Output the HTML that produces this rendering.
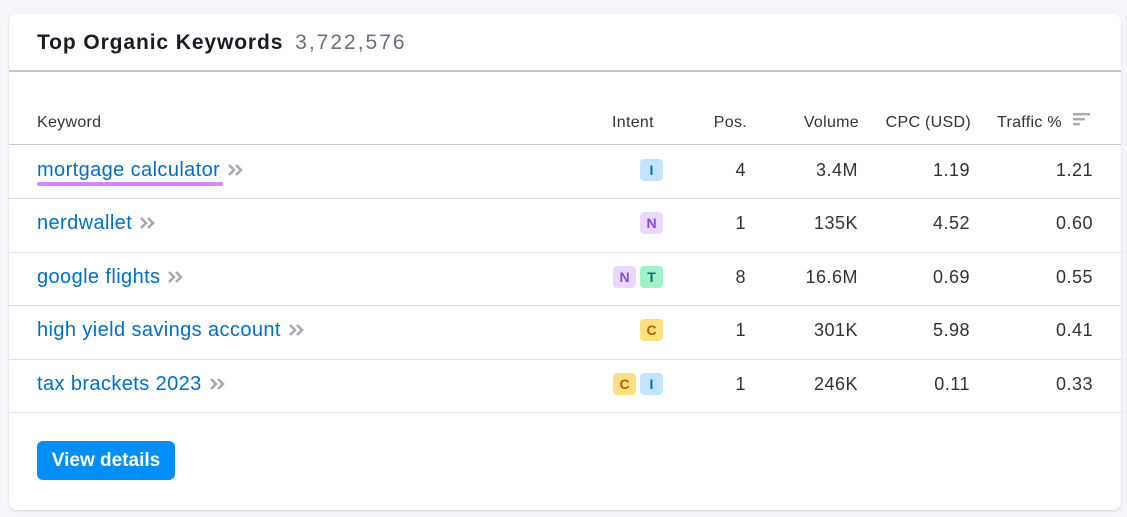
<!DOCTYPE html>
<html><head><style>
body{margin:0;background:#f4f5f9;font-family:"Liberation Sans",sans-serif;width:1127px;height:517px;position:relative;overflow:hidden}
.card{position:absolute;left:9px;top:14px;width:1112px;height:496px;background:#fff;border-radius:8px;box-shadow:0 1px 2px rgba(0,0,0,.12)}
.h{position:absolute;left:28px;top:17px;font-size:21px;font-weight:bold;color:#191b23;letter-spacing:0.9px}
.h span{font-weight:normal;color:#6c6e79;margin-left:4px;letter-spacing:2px}
.hl{position:absolute;left:0;right:0;top:56px;height:2px;background:#c4c7cf}
.th{position:absolute;top:100px;font-size:16px;color:#333;letter-spacing:0.3px}
.line{position:absolute;left:0;right:0;height:1px;background:#e0e1e9}
.kw{position:absolute;left:28px;font-size:20px;color:#006dca;letter-spacing:0.4px;white-space:nowrap}
.kw svg{margin-left:7px;vertical-align:-1px}
.num{position:absolute;font-size:18px;color:#333;text-align:right;letter-spacing:0.5px}
.bd{position:absolute;text-align:right;white-space:nowrap}
.b{display:inline-block;width:23px;height:22px;border-radius:4px;font-size:14px;font-weight:bold;text-align:center;line-height:22px;margin-left:4px}
.bI{background:#c4e5fe;color:#006dca}.bN{background:#ead9ff;color:#8649e1}.bT{background:#9ef2c9;color:#007c65}.bC{background:#fce081;color:#b95c00}
.btn{position:absolute;left:28px;top:427px;width:138px;height:39px;background:#008ff8;border-radius:6px;color:#fff;font-weight:bold;font-size:19px;line-height:39px;text-align:center}
</style></head><body><div class="card">
<div class="h">Top Organic Keywords<span> 3,722,576</span></div>
<div class="hl"></div>
<div class="th" style="left:28px">Keyword</div>
<div class="th" style="left:603px">Intent</div>
<div class="th" style="right:374px">Pos.</div>
<div class="th" style="right:262px">Volume</div>
<div class="th" style="right:150px">CPC (USD)</div>
<div class="th" style="left:988px">Traffic %</div>
<svg style="position:absolute;left:1064px;top:98px" width="18" height="16"><rect x="0" y="1" width="17" height="2.4" fill="#a8a9b3"/><rect x="0" y="6" width="12" height="2.4" fill="#a8a9b3"/><rect x="0" y="11" width="7" height="2.4" fill="#a8a9b3"/></svg>
<div class="line" style="top:130px;background:#c4c7cf"></div>
<div class="line" style="top:184px"></div><div class="line" style="top:238px"></div><div class="line" style="top:291px"></div><div class="line" style="top:345px"></div><div class="line" style="top:398px"></div>
<div class="kw" style="top:145px">mortgage calculator<svg width="18" height="14" viewBox="0 0 18 14"><path d="M2 2l5 5-5 5M9 2l5 5-5 5" stroke="#a8a9b3" stroke-width="2.6" fill="none"/></svg></div>
<div style="position:absolute;left:28px;top:168px;width:186px;height:4px;border-radius:2px;background:#d985fb"></div>
<div class="kw" style="top:198px">nerdwallet<svg width="18" height="14" viewBox="0 0 18 14"><path d="M2 2l5 5-5 5M9 2l5 5-5 5" stroke="#a8a9b3" stroke-width="2.6" fill="none"/></svg></div>
<div class="kw" style="top:252px">google flights<svg width="18" height="14" viewBox="0 0 18 14"><path d="M2 2l5 5-5 5M9 2l5 5-5 5" stroke="#a8a9b3" stroke-width="2.6" fill="none"/></svg></div>
<div class="kw" style="top:305px">high yield savings account<svg width="18" height="14" viewBox="0 0 18 14"><path d="M2 2l5 5-5 5M9 2l5 5-5 5" stroke="#a8a9b3" stroke-width="2.6" fill="none"/></svg></div>
<div class="kw" style="top:359px">tax brackets 2023<svg width="18" height="14" viewBox="0 0 18 14"><path d="M2 2l5 5-5 5M9 2l5 5-5 5" stroke="#a8a9b3" stroke-width="2.6" fill="none"/></svg></div>
<div class="bd" style="right:458px;top:145px"><span class="b bI">I</span></div>
<div class="bd" style="right:458px;top:198px"><span class="b bN">N</span></div>
<div class="bd" style="right:458px;top:252px"><span class="b bN">N</span><span class="b bT">T</span></div>
<div class="bd" style="right:458px;top:305px"><span class="b bC">C</span></div>
<div class="bd" style="right:458px;top:359px"><span class="b bC">C</span><span class="b bI">I</span></div>
<div class="num" style="right:375px;top:146px">4</div><div class="num" style="right:263px;top:146px">3.4M</div><div class="num" style="right:151px;top:146px">1.19</div><div class="num" style="right:28px;top:146px">1.21</div>
<div class="num" style="right:375px;top:199px">1</div><div class="num" style="right:263px;top:199px">135K</div><div class="num" style="right:151px;top:199px">4.52</div><div class="num" style="right:28px;top:199px">0.60</div>
<div class="num" style="right:375px;top:253px">8</div><div class="num" style="right:263px;top:253px">16.6M</div><div class="num" style="right:151px;top:253px">0.69</div><div class="num" style="right:28px;top:253px">0.55</div>
<div class="num" style="right:375px;top:306px">1</div><div class="num" style="right:263px;top:306px">301K</div><div class="num" style="right:151px;top:306px">5.98</div><div class="num" style="right:28px;top:306px">0.41</div>
<div class="num" style="right:375px;top:360px">1</div><div class="num" style="right:263px;top:360px">246K</div><div class="num" style="right:151px;top:360px">0.11</div><div class="num" style="right:28px;top:360px">0.33</div>
<div class="btn">View details</div>
</div></body></html>
